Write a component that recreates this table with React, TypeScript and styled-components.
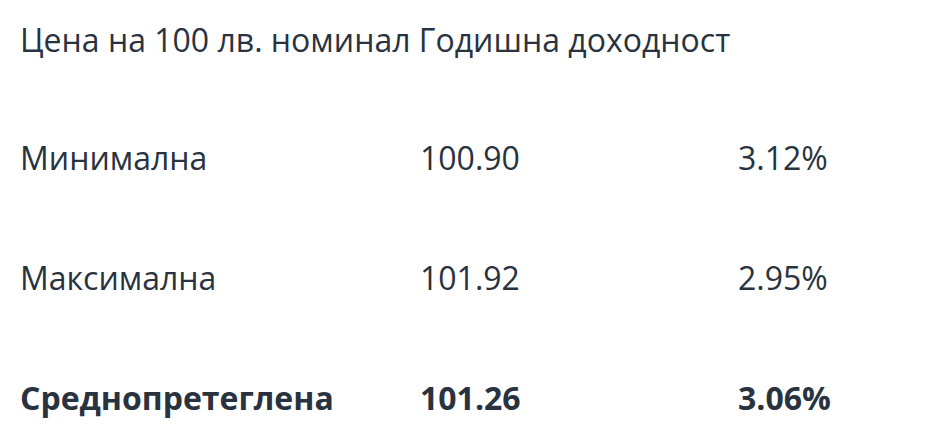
import React from 'react'
import styled, { createGlobalStyle } from 'styled-components'

const GlobalStyle = createGlobalStyle`
  html, body {
    margin: 0;
    padding: 0;
    background: #ffffff;
  }
  body {
    font-family: "Open Sans", "Noto Sans", sans-serif;
    color: #29333f;
  }
`

const Table = styled.div`
  display: grid;
  grid-template-columns: 400px 318px auto;
  row-gap: 80px;
  padding: 20px 0 0 20px;
`

const HeaderRow = styled.div`
  grid-column: 1 / -1;
  font-size: 32px;
  line-height: 40px;
  margin-bottom: -2px;
  white-space: nowrap;
`

const Cell = styled.div<{ $bold?: boolean }>`
  font-size: 32px;
  line-height: 40px;
  font-weight: ${(p) => (p.$bold ? 700 : 400)};
  white-space: nowrap;
`

const rows = [
  { label: 'Минимална', price: '100.90', yield: '3.12%' },
  { label: 'Максимална', price: '101.92', yield: '2.95%' },
  { label: 'Среднопретеглена', price: '101.26', yield: '3.06%', bold: true },
]

const App: React.FC = () => {
  return (
    <>
      <GlobalStyle />
      <Table>
        <HeaderRow>
          <span>Цена на 100 лв. номинал</span> <span>Годишна доходност</span>
        </HeaderRow>
        {rows.map((r) => (
          <React.Fragment key={r.label}>
            <Cell $bold={r.bold}>{r.label}</Cell>
            <Cell $bold={r.bold}>{r.price}</Cell>
            <Cell $bold={r.bold}>{r.yield}</Cell>
          </React.Fragment>
        ))}
      </Table>
    </>
  )
}

export default App
